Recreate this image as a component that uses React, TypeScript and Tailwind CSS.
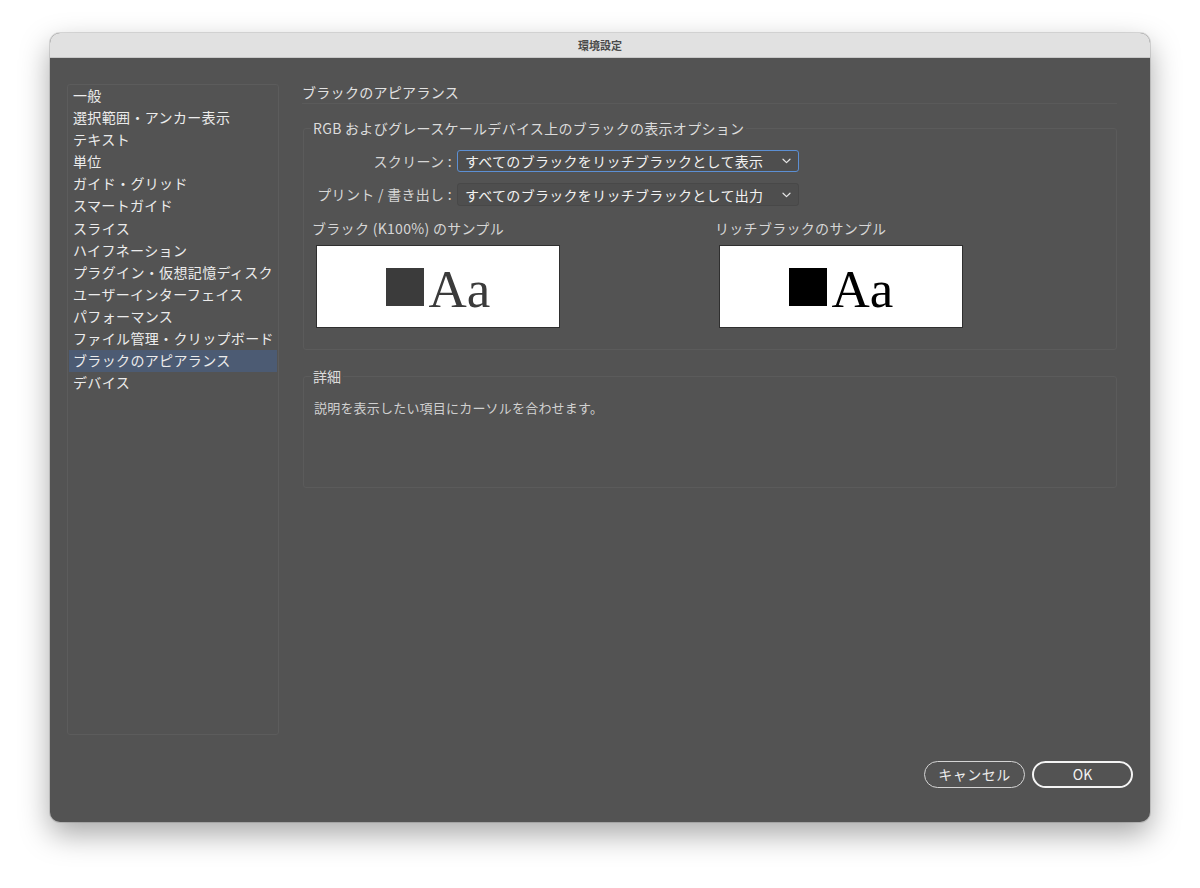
import React from "react";

const items = [
  "一般",
  "選択範囲・アンカー表示",
  "テキスト",
  "単位",
  "ガイド・グリッド",
  "スマートガイド",
  "スライス",
  "ハイフネーション",
  "プラグイン・仮想記憶ディスク",
  "ユーザーインターフェイス",
  "パフォーマンス",
  "ファイル管理・クリップボード",
  "ブラックのアピアランス",
  "デバイス",
];

const font = { fontFamily: '"Noto Sans CJK JP", "Noto Sans", sans-serif' };

function Chevron() {
  return (
    <svg width="9" height="6" viewBox="0 0 9 6" className="shrink-0">
      <path d="M1 1.2 L4.5 4.6 L8 1.2" fill="none" stroke="#e6e6e6" strokeWidth="1.2" strokeLinecap="round" strokeLinejoin="round" />
    </svg>
  );
}

function Select({ text, focused, h }: { text: string; focused?: boolean; h: string }) {
  return (
    <div
      className={
        "w-[342px] flex items-center justify-between pl-[7px] pr-[7px] rounded-[3px] bg-[#4e4e4e] text-[14px] text-[#f2f2f2] tracking-[0.3px] " +
        h +
        " " +
        (focused ? "border-[1.5px] border-[#5c8fd3]" : "border border-[#484848]")
      }
    >
      <span className="leading-[18px]">{text}</span>
      <Chevron />
    </div>
  );
}

function Sample({ label, color }: { label: string; color: string }) {
  return (
    <div className="flex flex-col">
      <div className="text-[14px] leading-[18px] text-[#d6d6d6] tracking-[0.3px]">{label}</div>
      <div className="ml-[4px] mt-[8px] w-[244px] h-[83px] bg-white border border-[#2f2f2f] flex items-center justify-center gap-[5px]">
        <div className="w-[38px] h-[38px]" style={{ backgroundColor: color }} />
        <div
          className="text-[53px] leading-[40px] pt-[4px]"
          style={{ fontFamily: '"Liberation Serif", "Times New Roman", serif', color }}
        >
          Aa
        </div>
      </div>
    </div>
  );
}

export default function App() {
  return (
    <div className="min-h-[888px] w-[1200px] bg-white pt-[33px] pl-[50px]" style={font}>
      <div className="w-[1100px] h-[789px] rounded-[10px] overflow-hidden flex flex-col bg-[#535353] shadow-[0_12px_30px_rgba(0,0,0,0.35),0_0_0_1px_rgba(0,0,0,0.12)]">
        <div className="h-[25px] shrink-0 bg-[#e1e1e1] border-b border-[#c8c8c8] flex items-center justify-center text-[11px] font-bold text-[#4a4a4a]">
          環境設定
        </div>
        <div className="flex-1 flex flex-col px-[17px] pt-[26px]">
          <div className="flex">
            <div className="w-[212px] h-[651px] border border-[#5c5c5c] rounded-[3px] p-[1px] pt-0 flex flex-col">
              {items.map((it, i) => (
                <div
                  key={it}
                  className={
                    "h-[22.1px] leading-[20px] pl-[4px] text-[14px] tracking-[0.35px] text-[#ececec] " +
                    (i === 12 ? "bg-[#4c5b73]" : "")
                  }
                >
                  {it}
                </div>
              ))}
            </div>
            <div className="ml-[23px] w-[815px] flex flex-col">
              <div className="text-[14px] leading-[16px] pb-[3px] border-b border-[#5a5a5a] text-[#e2e2e2] tracking-[0.3px]">
                ブラックのアピアランス
              </div>
              <fieldset className="mt-[15px] ml-[1px] border border-[#5b5b5b] rounded-[3px] pl-[7px] pr-[9px] pb-[21px]">
                <legend className="px-[2px] text-[14px] leading-[18px] text-[#dcdcdc] tracking-[0.3px]">
                  RGB およびグレースケールデバイス上のブラックの表示オプション
                </legend>
                <div className="mt-[13px] flex items-center">
                  <div className="w-[146px] pr-[5px] text-right text-[14px] text-[#d6d6d6] tracking-[0.3px]">スクリーン :</div>
                  <Select text="すべてのブラックをリッチブラックとして表示" focused h="h-[22px]" />
                </div>
                <div className="mt-[11px] flex items-center">
                  <div className="w-[146px] pr-[5px] text-right text-[14px] text-[#d6d6d6] tracking-[0.3px] whitespace-nowrap">プリント / 書き出し :</div>
                  <Select text="すべてのブラックをリッチブラックとして出力" h="h-[23px]" />
                </div>
                <div className="mt-[13px] ml-[1px] grid grid-cols-[403px_1fr]">
                  <Sample label="ブラック (K100%) のサンプル" color="#3b3b3b" />
                  <Sample label="リッチブラックのサンプル" color="#000000" />
                </div>
              </fieldset>
              <fieldset className="mt-[17px] ml-[1px] h-[121px] border border-[#5b5b5b] rounded-[3px] pl-[7px] pr-[9px]">
                <legend className="px-[2px] text-[14px] leading-[18px] text-[#dcdcdc]">詳細</legend>
                <div className="mt-[14px] ml-[3px] text-[13px] leading-[18px] text-[#d0d0d0] tracking-[0.2px]">
                  説明を表示したい項目にカーソルを合わせます。
                </div>
              </fieldset>
            </div>
          </div>
          <div className="mt-[26px] flex justify-end gap-[7px]">
            <div className="w-[101px] h-[27px] rounded-full border border-[#d4d4d4] flex items-center justify-center text-[14px] text-[#ececec] tracking-[0.5px]">
              キャンセル
            </div>
            <div className="w-[101px] h-[27px] rounded-full border-2 border-[#f4f4f4] flex items-center justify-center text-[14px] text-[#f2f2f2]">
              OK
            </div>
          </div>
        </div>
      </div>
    </div>
  );
}
